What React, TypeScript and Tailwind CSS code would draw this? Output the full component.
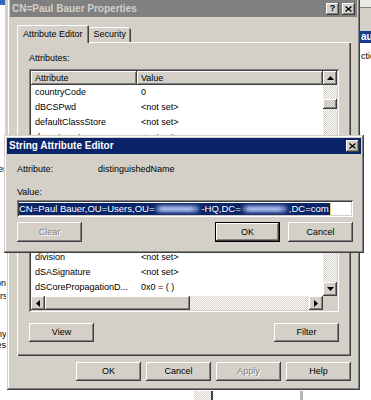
import React from "react";

const raised =
  "shadow-[inset_-1px_-1px_#404040,inset_1px_1px_#ffffff,inset_-2px_-2px_#808080,inset_2px_2px_#d4d0c8]";
const sunken =
  "shadow-[inset_1px_1px_#808080,inset_-1px_-1px_#ffffff,inset_2px_2px_#404040,inset_-2px_-2px_#d4d0c8]";
const frame =
  "shadow-[inset_-1px_-1px_#404040,inset_1px_1px_#d4d0c8,inset_-2px_-2px_#808080,inset_2px_2px_#ffffff]";
const dither =
  "bg-[image:repeating-conic-gradient(#ffffff_0_25%,#d4d0c8_0_50%)] bg-size-[2px_2px] bg-[length:2px_2px]";

function Tri({ dir }: { dir: "up" | "down" | "left" | "right" }) {
  const vert = dir === "up" || dir === "down";
  const w = vert ? 7 : 4;
  const h = vert ? 4 : 7;
  const pts = {
    up: "0,4 3.5,0 7,4",
    down: "0,0 7,0 3.5,4",
    left: "4,0 4,7 0,3.5",
    right: "0,0 0,7 4,3.5",
  }[dir];
  return (
    <svg width={w} height={h} viewBox={`0 0 ${w} ${h}`}>
      <polygon points={pts} fill="#000000" />
    </svg>
  );
}

function ScrollBtn({ dir }: { dir: "up" | "down" | "left" | "right" }) {
  return (
    <div className={"w-[14px] h-[14px] shrink-0 bg-[#d4d0c8] flex items-center justify-center " + raised}>
      <Tri dir={dir} />
    </div>
  );
}

function Btn({
  label,
  disabled = false,
  def = false,
  tall = false,
}: {
  label: string;
  disabled?: boolean;
  def?: boolean;
  tall?: boolean;
}) {
  const h = tall ? "h-[20px]" : "h-[19px]";
  if (def) {
    return (
      <div className={"w-[65px] " + h + " border border-black bg-[#d4d0c8] flex"}>
        <div className={"flex-1 flex items-center justify-center " + raised}>
          <span>{label}</span>
        </div>
      </div>
    );
  }
  return (
    <div className={"w-[65px] shrink-0 " + h + " bg-[#d4d0c8] flex items-center justify-center " + raised}>
      <span className={disabled ? "text-[#808080] [text-shadow:1px_1px_0_#ffffff]" : ""}>{label}</span>
    </div>
  );
}

function TitleBtn({ kind }: { kind: "help" | "close" }) {
  return (
    <div className={"w-[13px] h-[12px] bg-[#d4d0c8] flex items-center justify-center " + raised}>
      {kind === "help" ? (
        <span className="font-bold text-[9px] text-black leading-none">?</span>
      ) : (
        <svg width="7" height="6" viewBox="0 0 7 6">
          <path d="M0.5 0.5 L6.5 5.5 M6.5 0.5 L0.5 5.5" stroke="#000000" strokeWidth="1.3" />
        </svg>
      )}
    </div>
  );
}

const rows: [string, string][] = [
  ["countryCode", "0"],
  ["dBCSPwd", "<not set>"],
  ["defaultClassStore", "<not set>"],
  ["department", "<not set>"],
  ["departmentNumber", "<not set>"],
  ["description", "<not set>"],
  ["desktopProfile", "<not set>"],
  ["destinationIndicator", "<not set>"],
  ["displayName", "<not set>"],
  ["displayNamePrintable", "<not set>"],
  ["distinguishedName", "CN=Paul Bauer,OU=Use..."],
  ["division", "<not set>"],
  ["dSASignature", "<not set>"],
  ["dSCorePropagationD...", "0x0 = ( )"],
  ["dynamicLDAPServer", "<not set>"],
];

function Fragment({ text, top }: { text: string; top: number }) {
  return (
    <div
      className="absolute left-[-30px] w-[36px] h-[10px] text-right whitespace-nowrap overflow-hidden text-[9px] leading-[10px]"
      style={{ top }}
    >
      {text}
    </div>
  );
}

function Smudge({ w }: { w: number }) {
  return (
    <span className="relative inline-block h-[12px]" style={{ width: w }}>
      <span className="absolute left-[2px] right-[2px] top-[3px] h-[6px] rounded-full bg-[#8ea3dc] blur-[2px]" />
      <span className="absolute left-[6px] right-[8px] top-[4px] h-[4px] rounded-full bg-[#a9bbe8] blur-[1.5px]" />
    </span>
  );
}

export default function App() {
  return (
    <div className="relative w-[371px] h-[400px] overflow-hidden bg-white font-['Liberation_Sans',Arial,sans-serif] text-[9px] leading-none text-black">
      {/* background desktop pieces, left */}
      <div className="absolute left-0 top-0 w-[6px] h-[5px] bg-[#3b66c0]" />
      <div className="absolute left-[5px] top-0 w-[2px] h-[135px] bg-[#d4d0c8]" />
      <Fragment text="Manager" top={164} />
      <Fragment text="function" top={278} />
      <Fragment text="members" top={291} />
      <Fragment text="company" top={329} />
      <Fragment text="offices" top={340} />

      {/* background window, right */}
      <div className="absolute left-[359px] top-0 w-[12px] h-[31px] bg-[#d4d0c8] flex flex-col">
        <div className="h-[8px] bg-[#ecebe6] border-b border-[#808080]" />
      </div>
      <div className="absolute left-[360px] top-[31px] w-[11px] h-[12px] bg-[#1a3a8c] overflow-hidden flex items-center">
        <span className="pl-[1px] text-white font-bold text-[10px] whitespace-nowrap">auer</span>
      </div>
      <div className="absolute left-[360px] top-[52px] w-[11px] h-[10px] overflow-hidden">
        <span className="pl-[1px] whitespace-nowrap">ction</span>
      </div>

      {/* background pieces, bottom */}
      <div className={"absolute left-[194px] top-[391px] w-[17px] h-[9px] " + dither} />
      <div className="absolute left-[211px] top-[391px] w-[2px] h-[9px] bg-[#404040]" />
      <div className="absolute left-[300px] top-[391px] w-[3px] h-[9px] bg-[#b8b6b0]" />

      {/* main properties window */}
      <div className={"absolute z-10 left-[7px] top-[-3px] w-[353px] h-[393px] bg-[#d4d0c8] p-[3px] flex flex-col " + frame}>
        <div className="h-[17px] shrink-0 bg-[#808080] flex items-center pl-[2px] pr-[2px]">
          <span className="text-[#d4d0c8] font-bold text-[10px] whitespace-nowrap">CN=Paul Bauer Properties</span>
          <div className="ml-auto flex gap-[3px]">
            <TitleBtn kind="help" />
            <TitleBtn kind="close" />
          </div>
        </div>

        <div className="flex-1 min-h-0 flex flex-col pl-[7px] pr-[6px] pt-[8px]">
          {/* tabs */}
          <div className="h-[17px] shrink-0 flex items-end">
            <div className="relative z-10 h-[18px] mb-[-1px] px-[6px] flex items-center bg-[#d4d0c8] rounded-t-[2px] shadow-[inset_1px_1px_#ffffff,inset_-1px_0_#404040,inset_-2px_0_#808080]">
              Attribute Editor
            </div>
            <div className="h-[15px] px-[5px] flex items-center bg-[#d4d0c8] rounded-t-[2px] shadow-[inset_0_1px_#ffffff,inset_-1px_0_#404040,inset_-2px_0_#808080]">
              Security
            </div>
          </div>

          {/* tab panel */}
          <div className="flex-1 min-h-0 flex flex-col px-[12px] pt-[10px] pb-[14px] bg-[#d4d0c8] shadow-[inset_1px_1px_#ffffff,inset_-1px_-1px_#404040,inset_-2px_-2px_#808080]">
            <div className="h-[12px] shrink-0 flex items-center">Attributes:</div>

            {/* list box */}
            <div className={"mt-[5px] flex-1 min-h-0 bg-white p-[2px] flex flex-col " + sunken}>
              <div className="flex-1 min-h-0 flex">
                <div className="flex-1 min-h-0 flex flex-col min-w-0 overflow-hidden">
                  <div className="h-[14px] shrink-0 flex">
                    <div className={"w-[106px] h-full bg-[#d4d0c8] flex items-center pl-[4px] " + raised}>Attribute</div>
                    <div className={"flex-1 h-full bg-[#d4d0c8] flex items-center pl-[4px] " + raised}>Value</div>
                  </div>
                  <div className="flex-1 min-h-0 overflow-hidden">
                    {rows.map(([a, v]) => (
                      <div key={a} className="h-[15px] flex items-center whitespace-nowrap">
                        <div className="w-[106px] pl-[4px] overflow-hidden">{a}</div>
                        <div className="pl-[4px]">{v}</div>
                      </div>
                    ))}
                  </div>
                </div>
                {/* vertical scrollbar */}
                <div className={"w-[14px] shrink-0 flex flex-col " + dither}>
                  <ScrollBtn dir="up" />
                  <div className="flex-1 min-h-0">
                    <div className={"mt-[14px] h-[10px] bg-[#d4d0c8] " + raised} />
                  </div>
                  <ScrollBtn dir="down" />
                </div>
              </div>
              {/* horizontal scrollbar */}
              <div className="h-[14px] shrink-0 flex">
                <div className={"flex-1 flex " + dither}>
                  <ScrollBtn dir="left" />
                  <div className={"w-[145px] h-full bg-[#d4d0c8] " + raised} />
                  <div className="flex-1" />
                  <ScrollBtn dir="right" />
                </div>
                <div className="w-[14px] h-full bg-[#d4d0c8]" />
              </div>
            </div>

            <div className="mt-[11px] shrink-0 flex justify-between">
              <Btn label="View" />
              <Btn label="Filter" />
            </div>
          </div>

          {/* bottom buttons */}
          <div className="shrink-0 pt-[6px] pb-[6px] flex justify-end gap-[5px]">
            <Btn label="OK" />
            <Btn label="Cancel" />
            <Btn label="Apply" disabled />
            <Btn label="Help" />
          </div>
        </div>
      </div>

      {/* string attribute editor dialog */}
      <div className={"absolute z-20 left-[4px] top-[135px] w-[360px] h-[118px] bg-[#d4d0c8] p-[3px] flex flex-col " + frame}>
        <div className="h-[16px] shrink-0 bg-[#0a246a] flex items-center pl-[2px] pr-[2px]">
          <span className="text-white font-bold text-[10px] whitespace-nowrap">String Attribute Editor</span>
          <div className="ml-auto">
            <TitleBtn kind="close" />
          </div>
        </div>
        <div className="flex flex-col pl-[10px] pr-[8px] pt-[9px]">
          <div className="h-[12px] flex items-center">
            <span className="w-[81px]">Attribute:</span>
            <span>distinguishedName</span>
          </div>
          <div className="mt-[11px] h-[12px] flex items-center">Value:</div>
          <div className={"mt-[2px] h-[17px] bg-white flex items-center pl-[2px] " + sunken}>
            <div className="h-[12px] bg-[#0a246a] text-white text-[9.5px] flex items-center whitespace-nowrap pr-[1px]">
              <span>CN=Paul Bauer,OU=Users,OU=</span>
              <Smudge w={47} />
              <span>-HQ,DC=</span>
              <Smudge w={48} />
              <span>,DC=com</span>
            </div>
            <div className="w-[1px] h-[12px] bg-[#e8c878]" />
          </div>
          <div className="mt-[5px] flex">
            <Btn label="Clear" disabled tall />
            <div className="ml-auto flex gap-[8px]">
              <Btn label="OK" def tall />
              <Btn label="Cancel" tall />
            </div>
          </div>
        </div>
      </div>
    </div>
  );
}
